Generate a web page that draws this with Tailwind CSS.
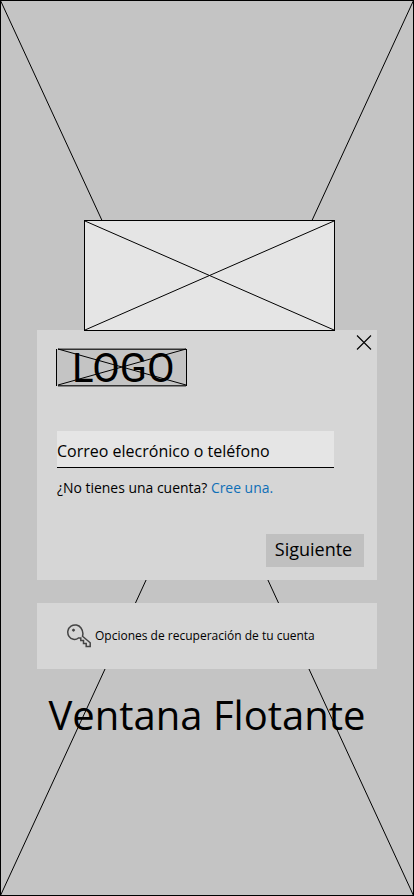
<!DOCTYPE html>
<html lang="es">
<head>
<meta charset="utf-8">
<title>Ventana Flotante</title>
<script src="https://cdn.jsdelivr.net/npm/@tailwindcss/browser@4"></script>
</head>
<body class="font-['Open_Sans',sans-serif] text-black">
<main class="relative isolate flex h-[896px] w-[414px] flex-col overflow-hidden border border-black bg-[#c4c4c4]">
  <svg class="absolute -left-px -top-px -z-10" width="414" height="896" fill="none" stroke="#000"><path d="M.5 .5 413.5 895.5M413.5 .5 .5 895.5"/></svg>

  <div class="mt-[219px] ml-[83px] h-[111px] w-[251px] border border-black bg-[#e5e5e5]">
    <svg class="block" width="249" height="109" fill="none" stroke="#000"><path d="M0 0 249 109M249 0 0 109"/></svg>
  </div>

  <section class="-mt-px -z-[1] ml-9 flex h-[250px] w-[340px] flex-col bg-[#d6d6d6] pl-5 pr-[13px]">
    <div class="flex items-start justify-between">
      <div class="mt-[18px] -ml-px grid h-[39px] w-[131px]">
        <svg class="col-start-1 row-start-1" width="131" height="39" fill="none" stroke="#000"><path d="M1 1H130V38H1Z" fill="#c4c4c4" stroke="none"/><path d="M2 1.2H130M2 37.8H130" stroke="#333" stroke-width="1.5"/><path d="M.5 1V38M130.5 1V38M2 1 130 37M2 37 130 1"/></svg>
        <span class="col-start-1 row-start-1 ml-4 font-['Roboto',sans-serif] text-[40px] leading-[42px]">LOGO</span>
      </div>
      <button class="mt-[5px] -mr-[8px]" aria-label="Cerrar"><svg class="block" width="16" height="16" fill="none" stroke="#000" stroke-width="1.1"><path d="M1 .5 15 14.5M15 .5 1 14.5"/></svg></button>
    </div>
    <label class="mt-11 flex h-[37px] w-[277px] items-center border-b border-black bg-[#e5e5e5] pt-[4px] text-base">Correo elecrónico o teléfono</label>
    <p class="mt-[10px] text-[13.95px] leading-5 whitespace-nowrap">¿No tienes una cuenta? <a class="text-[#0f6fb7]">Cree una.</a></p>
    <button class="mt-[36px] h-[33px] w-[98px] self-end bg-[#c0c0c0] pr-[3px] pb-[3px] text-[18px] leading-[30px]">Siguiente</button>
  </section>

  <section class="mt-[23px] -z-[1] ml-9 flex h-[66px] w-[340px] items-center bg-[#d6d6d6] pl-[29px]">
    <svg width="26" height="24" viewBox="0 0 26 24" fill="none" stroke="#444" stroke-width="1.5"><path d="M16.5 12.2 24.2 18.8V22.5H20.2V19.4H17.5V16.5H14.8V14L12.4 14C9.5 16.5 5 15.6 3 12.4 .8 9 1.6 4.4 5 2.2 8.4 0 12.8.8 15 4 16.8 6.5 17.3 9.5 16.5 12.2Z"/><circle cx="7.5" cy="6.2" r="1.1" fill="#444" stroke-width=".8"/></svg>
    <span class="ml-[3px] text-[12px] whitespace-nowrap">Opciones de recuperación de tu cuenta</span>
  </section>

  <h1 class="mt-[16px] ml-[47.5px] text-[40px] leading-[60px] whitespace-nowrap">Ventana Flotante</h1>
</main>
</body>
</html>
